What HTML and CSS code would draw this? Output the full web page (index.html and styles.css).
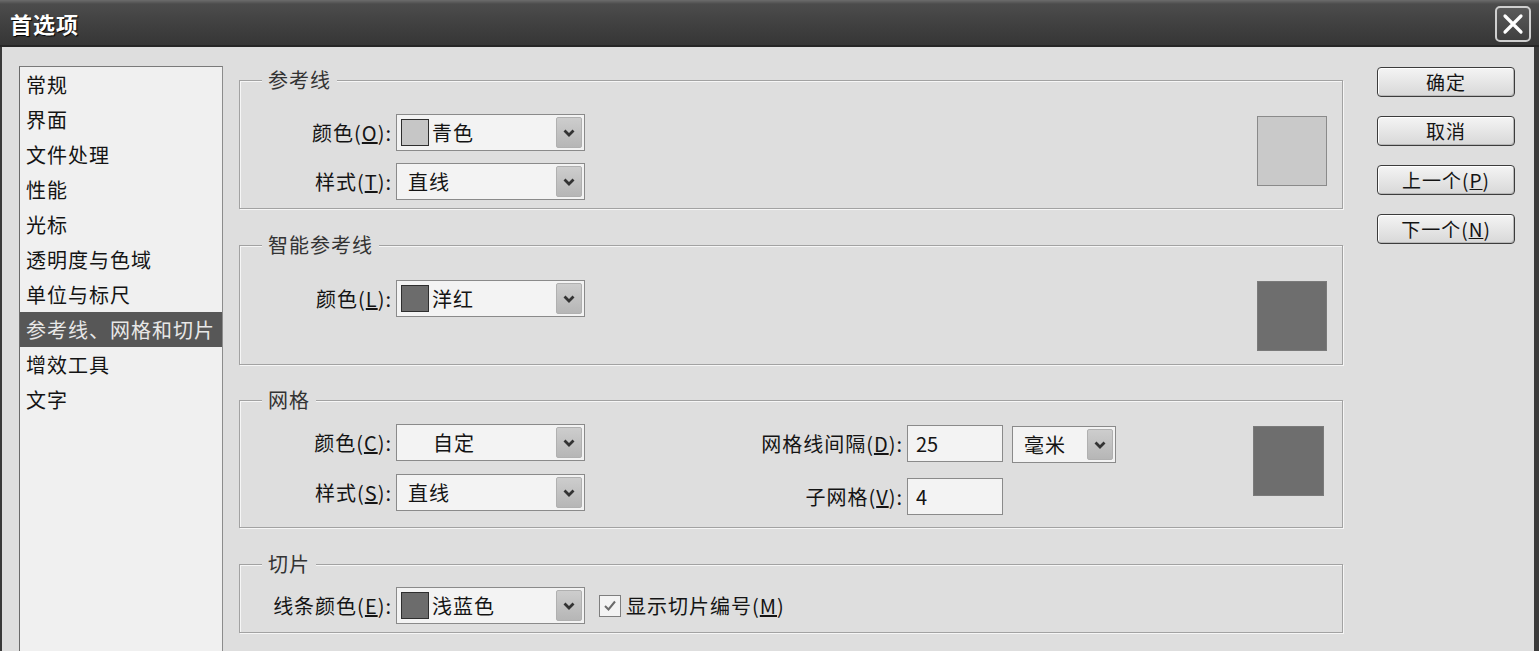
FILE: index.html
```html
<!DOCTYPE html>
<html lang="zh-CN">
<head>
    <meta charset="UTF-8">
    <meta name="viewport" content="width=device-width, initial-scale=1.0">
    <title>首选项</title>
    <link rel="stylesheet" href="styles.css">
</head>
<body>
    <div class="window">
        <!-- Заголовок окна -->
        <div class="titlebar">
            <span class="title">首选项</span>
            <button class="close" title="关闭">
                <svg width="24" height="24" viewBox="0 0 24 24">
                    <path d="M4 4 L20 20 M20 4 L4 20" stroke="#fff" stroke-width="3.2" stroke-linecap="round"/>
                </svg>
            </button>
        </div>

        <div class="content">
            <!-- Разделы -->
            <ul class="nav">
                <li>常规</li>
                <li>界面</li>
                <li>文件处理</li>
                <li>性能</li>
                <li>光标</li>
                <li>透明度与色域</li>
                <li>单位与标尺</li>
                <li class="active">参考线、网格和切片</li>
                <li>增效工具</li>
                <li>文字</li>
            </ul>

            <div class="panels">
                <fieldset class="group group-guides">
                    <legend>参考线</legend>
                    <div class="form-grid">
                        <label>颜色(<u>O</u>):</label>
                        <div class="select">
                            <span class="chip chip-light"></span>
                            <span class="select-text">青色</span>
                            <span class="arrow"><svg width="12" height="8" viewBox="0 0 12 8"><path d="M1.5 1.5 L6 6 L10.5 1.5" fill="none" stroke="#333" stroke-width="2.8"/></svg></span>
                        </div>
                        <label>样式(<u>T</u>):</label>
                        <div class="select">
                            <span class="select-text plain">直线</span>
                            <span class="arrow"><svg width="12" height="8" viewBox="0 0 12 8"><path d="M1.5 1.5 L6 6 L10.5 1.5" fill="none" stroke="#333" stroke-width="2.8"/></svg></span>
                        </div>
                    </div>
                    <div class="swatch swatch-light"></div>
                </fieldset>

                <fieldset class="group group-smart">
                    <legend>智能参考线</legend>
                    <div class="form-grid">
                        <label>颜色(<u>L</u>):</label>
                        <div class="select">
                            <span class="chip chip-dark"></span>
                            <span class="select-text">洋红</span>
                            <span class="arrow"><svg width="12" height="8" viewBox="0 0 12 8"><path d="M1.5 1.5 L6 6 L10.5 1.5" fill="none" stroke="#333" stroke-width="2.8"/></svg></span>
                        </div>
                    </div>
                    <div class="swatch swatch-dark"></div>
                </fieldset>

                <fieldset class="group group-grid">
                    <legend>网格</legend>
                    <div class="form-grid">
                        <label>颜色(<u>C</u>):</label>
                        <div class="select">
                            <span class="select-text custom">自定</span>
                            <span class="arrow"><svg width="12" height="8" viewBox="0 0 12 8"><path d="M1.5 1.5 L6 6 L10.5 1.5" fill="none" stroke="#333" stroke-width="2.8"/></svg></span>
                        </div>
                        <label>样式(<u>S</u>):</label>
                        <div class="select">
                            <span class="select-text plain">直线</span>
                            <span class="arrow"><svg width="12" height="8" viewBox="0 0 12 8"><path d="M1.5 1.5 L6 6 L10.5 1.5" fill="none" stroke="#333" stroke-width="2.8"/></svg></span>
                        </div>
                    </div>
                    <div class="form-grid spacing-grid">
                        <label>网格线间隔(<u>D</u>):</label>
                        <input class="field" type="text" value="25">
                        <div class="select unit">
                            <span class="select-text plain">毫米</span>
                            <span class="arrow"><svg width="12" height="8" viewBox="0 0 12 8"><path d="M1.5 1.5 L6 6 L10.5 1.5" fill="none" stroke="#333" stroke-width="2.8"/></svg></span>
                        </div>
                        <label>子网格(<u>V</u>):</label>
                        <input class="field" type="text" value="4">
                    </div>
                    <div class="swatch swatch-dark swatch-grid"></div>
                </fieldset>

                <fieldset class="group group-slices">
                    <legend>切片</legend>
                    <div class="form-grid">
                        <label>线条颜色(<u>E</u>):</label>
                        <div class="select">
                            <span class="chip chip-dark"></span>
                            <span class="select-text">浅蓝色</span>
                            <span class="arrow"><svg width="12" height="8" viewBox="0 0 12 8"><path d="M1.5 1.5 L6 6 L10.5 1.5" fill="none" stroke="#333" stroke-width="2.8"/></svg></span>
                        </div>
                    </div>
                    <label class="check">
                        <span class="box">
                            <svg width="16" height="16" viewBox="0 0 16 16"><path d="M3 8 L6.5 11.5 L13 3.5" fill="none" stroke="#6a6a6a" stroke-width="2"/></svg>
                        </span>
                        <span>显示切片编号(<u>M</u>)</span>
                    </label>
                </fieldset>
            </div>

            <!-- Кнопки -->
            <div class="actions">
                <button class="btn">确定</button>
                <button class="btn">取消</button>
                <button class="btn">上一个(<u>P</u>)</button>
                <button class="btn">下一个(<u>N</u>)</button>
            </div>
        </div>
    </div>
</body>
</html>
```

FILE: styles.css
```css
:root {
    --bg: #dedede;
    --line: #a2a2a2;
    --text: #141414;
    --field: #f3f3f3;
}

* {
    box-sizing: border-box;
    margin: 0;
    padding: 0;
    font-family: "Noto Sans CJK SC", sans-serif;
}

body {
    background: var(--bg);
    color: var(--text);
    overflow: hidden;
}

.window {
    width: 1539px;
    height: 651px;
    overflow: hidden;
    background: var(--bg);
}

/* Заголовок */
.titlebar {
    height: 47px;
    display: flex;
    align-items: center;
    justify-content: space-between;
    padding: 0 8px 0 10px;
    background: linear-gradient(#6c6c6c 0, #4c4c4c 4px, #404040 55%, #363636 100%);
    border-bottom: 2px solid #262626;
}

.title {
    color: #fff;
    font-size: 22px;
    font-weight: 700;
    letter-spacing: 1px;
    text-shadow: 1px 1px 1px #000;
}

.close {
    width: 36px;
    height: 36px;
    margin-top: 2px;
    display: flex;
    align-items: center;
    justify-content: center;
    background: linear-gradient(#5a5a5a, #404040);
    border: 2px solid #cfcfcf;
    border-radius: 5px;
}

/* Контент */
.content {
    display: flex;
    height: 604px;
    padding-left: 17px;
    border-left: 2px solid #3a3a3a;
    border-right: 5px solid #3a3a3a;
    letter-spacing: 1px;
}

.nav {
    list-style: none;
    width: 204px;
    margin-top: 19px;
    height: 620px;
    background: #f0f0f0;
    border: 1px solid #8c8c8c;
    border-left-color: #6a6a6a;
    border-top-color: #7a7a7a;
}

.nav li {
    height: 35px;
    line-height: 35px;
    padding-left: 6px;
    font-size: 20px;
    white-space: nowrap;
}

.nav li.active {
    background: #575757;
    color: #e8e8e8;
}

.panels {
    width: 1104px;
    margin-left: 16px;
    padding-top: 21px;
}

/* Группы */
.group {
    display: flex;
    align-items: flex-start;
    border: 1px solid var(--line);
    padding: 0 15px 8px 28px;
    box-shadow: inset 1px 1px 0 #f6f6f6, 1px 1px 0 #f6f6f6;
}

.group legend {
    font-size: 20px;
    line-height: 24px;
    padding: 0 6px;
    margin-left: -6px;
    color: #333;
    background: var(--bg);
}

.group + .group {
    margin-top: 24px;
}

.group-guides {
    padding-top: 22px;
}

.group-smart {
    padding-top: 23px;
    padding-bottom: 13px;
}

.group-grid {
    margin-top: 23px !important;
    padding-top: 12px;
    padding-bottom: 12px;
}

.group-slices {
    padding-top: 11px;
    align-items: center;
}

.form-grid {
    display: grid;
    grid-template-columns: 124px 189px;
    column-gap: 4px;
    row-gap: 12px;
    align-items: center;
}

.group-grid .form-grid {
    row-gap: 13px;
}

.form-grid label {
    font-size: 20px;
    text-align: right;
    white-space: nowrap;
}

.spacing-grid {
    grid-template-columns: 150px 96px 109px;
    column-gap: 4px;
    row-gap: 15px !important;
    margin-left: 168px;
}

.spacing-grid .unit {
    margin-left: 5px;
    margin-top: 2px;
}

/* Поля */
.select {
    height: 37px;
    display: flex;
    align-items: center;
    background: var(--field);
    border: 1px solid #8a8a8a;
    padding-left: 4px;
}

.chip {
    width: 28px;
    height: 27px;
    border: 1px solid #2e2e2e;
    margin-right: 3px;
}

.chip-light {
    background: #c6c6c6;
}

.chip-dark {
    background: #6c6c6c;
}

.select-text {
    flex: 1;
    font-size: 20px;
    white-space: nowrap;
}

.select-text.plain {
    padding-left: 7px;
}

.select-text.custom {
    padding-left: 32px;
}

.arrow {
    width: 26px;
    height: 31px;
    margin-right: 2px;
    display: flex;
    align-items: center;
    justify-content: center;
    background: linear-gradient(#cdcdcd, #b6b6b6);
    border: 1px solid #b0b0b0;
    border-radius: 2px;
}

.field {
    height: 37px;
    width: 96px;
    background: var(--field);
    border: 1px solid #8a8a8a;
    padding-left: 8px;
    font-size: 20px;
    color: var(--text);
}

.swatch {
    width: 70px;
    height: 70px;
    margin-left: auto;
    border: 1px solid #8a8a8a;
}

.group-guides .swatch {
    margin-top: 2px;
}

.group-smart .swatch {
    margin-top: 1px;
}

.swatch-light {
    background: #c9c9c9;
}

.swatch-dark {
    background: #6e6e6e;
    border-color: #7a7a7a;
}

.swatch-grid {
    width: 71px;
    margin-top: 2px;
    margin-right: 3px;
}

.check {
    display: flex;
    align-items: center;
    gap: 5px;
    margin-left: 14px;
    font-size: 20px;
}

.check .box {
    width: 22px;
    height: 22px;
    display: flex;
    align-items: center;
    justify-content: center;
    background: var(--field);
    border: 1px solid #7e7e7e;
}

/* Кнопки */
.actions {
    width: 138px;
    margin-left: 34px;
    padding-top: 20px;
    display: flex;
    flex-direction: column;
    gap: 19px;
}

.btn {
    height: 30px;
    font-size: 19px;
    line-height: 26px;
    letter-spacing: 1px;
    color: var(--text);
    background: linear-gradient(#f4f4f4, #d8d8d8);
    border: 1px solid #3c3c3c;
    border-radius: 4px;
    box-shadow: inset 1px 1px 0 #fff, inset -1px -1px 0 #b8b8b8;
}
```
